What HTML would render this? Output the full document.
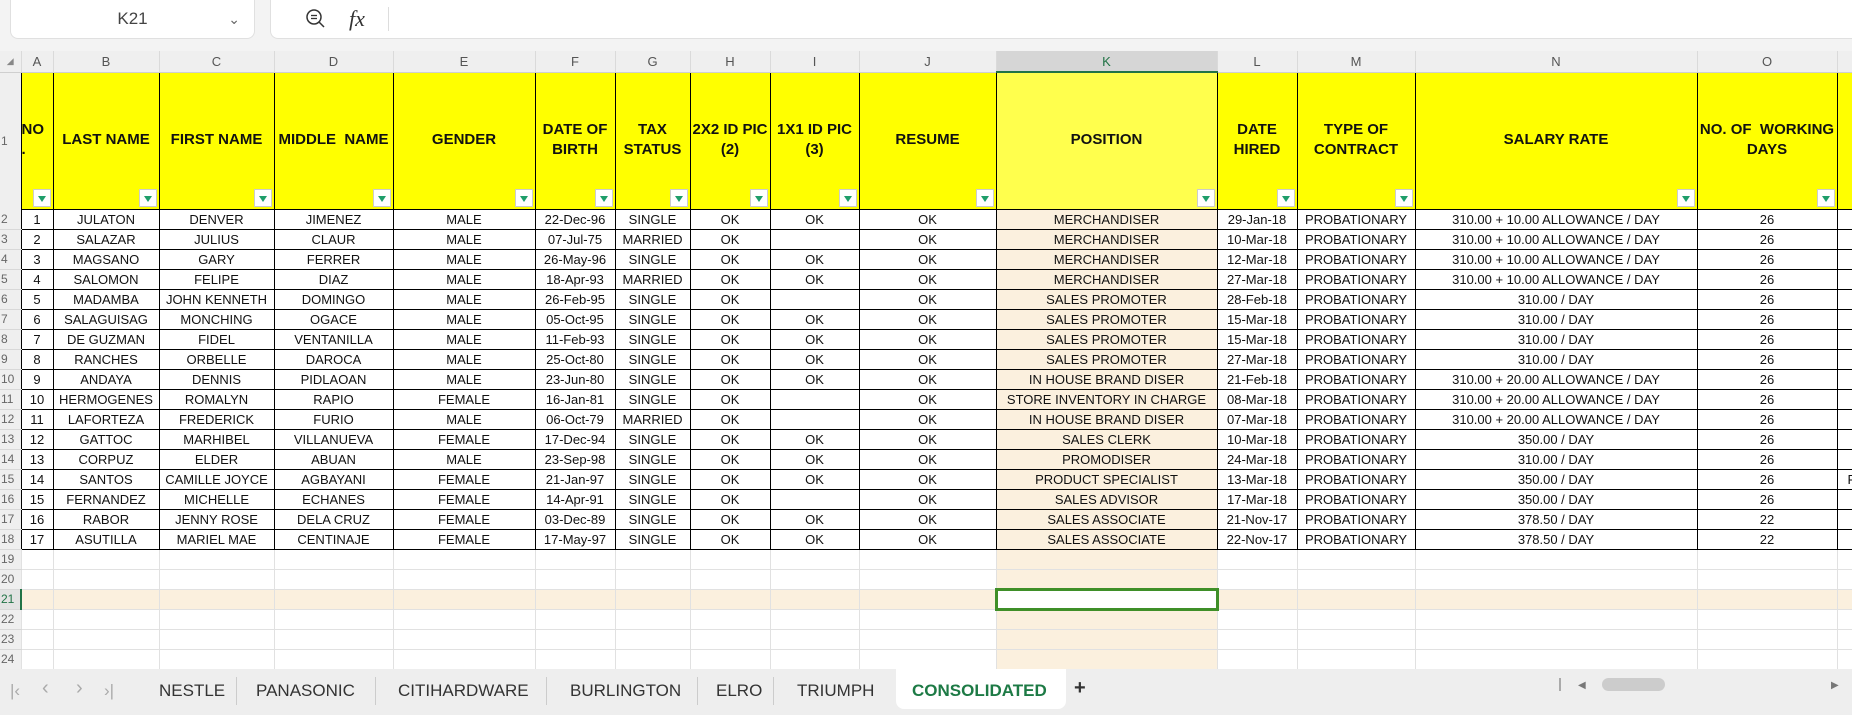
<!DOCTYPE html>
<html><head><meta charset="utf-8">
<style>
*{box-sizing:border-box;margin:0;padding:0}
body{width:1852px;height:715px;overflow:hidden;background:#fff;font-family:"Liberation Sans",sans-serif;position:relative}
#top{position:absolute;left:0;top:0;width:1852px;height:51px;background:#f3f3f3}
#nb{position:absolute;left:10px;top:0;width:245px;height:39px;background:#fff;border:1px solid #e0e0e0;border-top:none;border-radius:0 0 8px 8px;font-size:17px;color:#444;text-align:center;line-height:38px}
#fb{position:absolute;left:270px;top:0;width:1600px;height:39px;background:#fff;border:1px solid #e0e0e0;border-top:none;border-radius:0 0 0 8px}
table{position:absolute;left:0;top:51px;border-collapse:collapse;table-layout:fixed;width:1852px}
td{height:20px;font-size:13px;text-align:center;white-space:nowrap;overflow:hidden;border:1px solid #e1e1e1;color:#111;padding:0}
tr.ch td{height:21px;background:#efefef;color:#555;font-size:13px;border:none;border-right:1px solid #dadada;border-bottom:1px solid #cfcfcf}
td.rh{background:#efefef;color:#666;font-size:12px;border:none;border-bottom:1px solid #d8d8d8;text-align:left;padding-left:1px}
tr.h td{height:137px;background:#ffff00;font-weight:bold;font-size:15px;border:1px solid #000;white-space:normal;position:relative;line-height:20px;padding-bottom:2px}
tr.h td.rh{background:#efefef;font-weight:normal;font-size:12px;border:none;padding:0 0 0 1px}
tr.h td.k{background:#ffff4d}
.dd{position:absolute;right:2px;bottom:2px;width:18px;height:18px;background:#fff;border:1px solid #ccc}
.dd:after{content:"";position:absolute;left:4px;top:6px;border-left:4.5px solid transparent;border-right:4.5px solid transparent;border-top:6px solid #1e9e6a}
tr.d td{border:1px solid #000}
tr.d td.rh{border:none;border-bottom:1px solid #d8d8d8}
td.k{background:#fbf0de}
tr.sel td{background:#fbf0de}
tr.sel td.rh{background:#e3e3e3;color:#217346;border-right:2px solid #217346}
tr.sel td.kk{background:#fff;border:3px solid #3f8f28}
#tabs{position:absolute;left:0;top:669px;width:1852px;height:46px;background:#eeeeee;font-size:17px;color:#333}
.t{position:absolute;top:12px}
.sep{position:absolute;top:8px;width:1px;height:28px;background:#ccc}
</style></head><body>
<div id="top">
<div id="nb">K21<span style="position:absolute;right:14px;top:0;color:#666;font-size:14px">&#8964;</span></div>
<div id="fb">
<svg style="position:absolute;left:34px;top:8px" width="22" height="22" viewBox="0 0 22 22"><circle cx="9" cy="9" r="7" fill="none" stroke="#333" stroke-width="1.5"/><line x1="14" y1="14" x2="19" y2="19" stroke="#333" stroke-width="1.5"/><line x1="6" y1="7.5" x2="12" y2="7.5" stroke="#333" stroke-width="1.3"/><line x1="6" y1="10.5" x2="12" y2="10.5" stroke="#333" stroke-width="1.3"/></svg>
<span style="position:absolute;left:78px;top:6px;font-family:'Liberation Serif',serif;font-style:italic;font-size:22px;color:#333">fx</span>
<div style="position:absolute;left:117px;top:7px;width:1px;height:24px;background:#ddd"></div>
</div>
</div>
<table>
<colgroup><col style="width:21px"><col style="width:32px"><col style="width:106px"><col style="width:115px"><col style="width:119px"><col style="width:142px"><col style="width:80px"><col style="width:75px"><col style="width:80px"><col style="width:89px"><col style="width:137px"><col style="width:221px"><col style="width:80px"><col style="width:118px"><col style="width:282px"><col style="width:140px"><col style="width:15px"></colgroup>
<tr class="ch"><td style="font-size:9px;color:#888">&#9698;</td><td>A</td><td>B</td><td>C</td><td>D</td><td>E</td><td>F</td><td>G</td><td>H</td><td>I</td><td>J</td><td style="background:#d6d6d6;color:#217346;border-bottom:2px solid #217346">K</td><td>L</td><td>M</td><td>N</td><td>O</td><td></td></tr>
<tr class="h"><td class="rh">1</td><td style="text-align:left">NO<br>.<i class="dd"></i></td><td>LAST NAME<i class="dd"></i></td><td>FIRST NAME<i class="dd"></i></td><td>MIDDLE&nbsp; NAME<i class="dd"></i></td><td>GENDER<i class="dd"></i></td><td>DATE OF BIRTH<i class="dd"></i></td><td>TAX STATUS<i class="dd"></i></td><td>2X2 ID PIC (2)<i class="dd"></i></td><td>1X1 ID PIC (3)<i class="dd"></i></td><td>RESUME<i class="dd"></i></td><td class="k">POSITION<i class="dd"></i></td><td>DATE HIRED<i class="dd"></i></td><td>TYPE OF CONTRACT<i class="dd"></i></td><td>SALARY RATE<i class="dd"></i></td><td>NO. OF&nbsp; WORKING DAYS<i class="dd"></i></td><td></td></tr>
<tr class="d"><td class="rh">2</td><td>1</td><td>JULATON</td><td>DENVER</td><td>JIMENEZ</td><td>MALE</td><td>22-Dec-96</td><td>SINGLE</td><td>OK</td><td>OK</td><td>OK</td><td class="k">MERCHANDISER</td><td>29-Jan-18</td><td>PROBATIONARY</td><td>310.00 + 10.00 ALLOWANCE / DAY</td><td>26</td><td></td></tr>
<tr class="d"><td class="rh">3</td><td>2</td><td>SALAZAR</td><td>JULIUS</td><td>CLAUR</td><td>MALE</td><td>07-Jul-75</td><td>MARRIED</td><td>OK</td><td></td><td>OK</td><td class="k">MERCHANDISER</td><td>10-Mar-18</td><td>PROBATIONARY</td><td>310.00 + 10.00 ALLOWANCE / DAY</td><td>26</td><td></td></tr>
<tr class="d"><td class="rh">4</td><td>3</td><td>MAGSANO</td><td>GARY</td><td>FERRER</td><td>MALE</td><td>26-May-96</td><td>SINGLE</td><td>OK</td><td>OK</td><td>OK</td><td class="k">MERCHANDISER</td><td>12-Mar-18</td><td>PROBATIONARY</td><td>310.00 + 10.00 ALLOWANCE / DAY</td><td>26</td><td></td></tr>
<tr class="d"><td class="rh">5</td><td>4</td><td>SALOMON</td><td>FELIPE</td><td>DIAZ</td><td>MALE</td><td>18-Apr-93</td><td>MARRIED</td><td>OK</td><td>OK</td><td>OK</td><td class="k">MERCHANDISER</td><td>27-Mar-18</td><td>PROBATIONARY</td><td>310.00 + 10.00 ALLOWANCE / DAY</td><td>26</td><td></td></tr>
<tr class="d"><td class="rh">6</td><td>5</td><td>MADAMBA</td><td>JOHN KENNETH</td><td>DOMINGO</td><td>MALE</td><td>26-Feb-95</td><td>SINGLE</td><td>OK</td><td></td><td>OK</td><td class="k">SALES PROMOTER</td><td>28-Feb-18</td><td>PROBATIONARY</td><td>310.00 / DAY</td><td>26</td><td></td></tr>
<tr class="d"><td class="rh">7</td><td>6</td><td>SALAGUISAG</td><td>MONCHING</td><td>OGACE</td><td>MALE</td><td>05-Oct-95</td><td>SINGLE</td><td>OK</td><td>OK</td><td>OK</td><td class="k">SALES PROMOTER</td><td>15-Mar-18</td><td>PROBATIONARY</td><td>310.00 / DAY</td><td>26</td><td></td></tr>
<tr class="d"><td class="rh">8</td><td>7</td><td>DE GUZMAN</td><td>FIDEL</td><td>VENTANILLA</td><td>MALE</td><td>11-Feb-93</td><td>SINGLE</td><td>OK</td><td>OK</td><td>OK</td><td class="k">SALES PROMOTER</td><td>15-Mar-18</td><td>PROBATIONARY</td><td>310.00 / DAY</td><td>26</td><td></td></tr>
<tr class="d"><td class="rh">9</td><td>8</td><td>RANCHES</td><td>ORBELLE</td><td>DAROCA</td><td>MALE</td><td>25-Oct-80</td><td>SINGLE</td><td>OK</td><td>OK</td><td>OK</td><td class="k">SALES PROMOTER</td><td>27-Mar-18</td><td>PROBATIONARY</td><td>310.00 / DAY</td><td>26</td><td></td></tr>
<tr class="d"><td class="rh">10</td><td>9</td><td>ANDAYA</td><td>DENNIS</td><td>PIDLAOAN</td><td>MALE</td><td>23-Jun-80</td><td>SINGLE</td><td>OK</td><td>OK</td><td>OK</td><td class="k">IN HOUSE BRAND DISER</td><td>21-Feb-18</td><td>PROBATIONARY</td><td>310.00 + 20.00 ALLOWANCE / DAY</td><td>26</td><td></td></tr>
<tr class="d"><td class="rh">11</td><td>10</td><td>HERMOGENES</td><td>ROMALYN</td><td>RAPIO</td><td>FEMALE</td><td>16-Jan-81</td><td>SINGLE</td><td>OK</td><td></td><td>OK</td><td class="k">STORE INVENTORY IN CHARGE</td><td>08-Mar-18</td><td>PROBATIONARY</td><td>310.00 + 20.00 ALLOWANCE / DAY</td><td>26</td><td></td></tr>
<tr class="d"><td class="rh">12</td><td>11</td><td>LAFORTEZA</td><td>FREDERICK</td><td>FURIO</td><td>MALE</td><td>06-Oct-79</td><td>MARRIED</td><td>OK</td><td></td><td>OK</td><td class="k">IN HOUSE BRAND DISER</td><td>07-Mar-18</td><td>PROBATIONARY</td><td>310.00 + 20.00 ALLOWANCE / DAY</td><td>26</td><td></td></tr>
<tr class="d"><td class="rh">13</td><td>12</td><td>GATTOC</td><td>MARHIBEL</td><td>VILLANUEVA</td><td>FEMALE</td><td>17-Dec-94</td><td>SINGLE</td><td>OK</td><td>OK</td><td>OK</td><td class="k">SALES CLERK</td><td>10-Mar-18</td><td>PROBATIONARY</td><td>350.00 / DAY</td><td>26</td><td></td></tr>
<tr class="d"><td class="rh">14</td><td>13</td><td>CORPUZ</td><td>ELDER</td><td>ABUAN</td><td>MALE</td><td>23-Sep-98</td><td>SINGLE</td><td>OK</td><td>OK</td><td>OK</td><td class="k">PROMODISER</td><td>24-Mar-18</td><td>PROBATIONARY</td><td>310.00 / DAY</td><td>26</td><td></td></tr>
<tr class="d"><td class="rh">15</td><td>14</td><td>SANTOS</td><td>CAMILLE JOYCE</td><td>AGBAYANI</td><td>FEMALE</td><td>21-Jan-97</td><td>SINGLE</td><td>OK</td><td>OK</td><td>OK</td><td class="k">PRODUCT SPECIALIST</td><td>13-Mar-18</td><td>PROBATIONARY</td><td>350.00 / DAY</td><td>26</td><td style="text-align:left;padding-left:10px">F</td></tr>
<tr class="d"><td class="rh">16</td><td>15</td><td>FERNANDEZ</td><td>MICHELLE</td><td>ECHANES</td><td>FEMALE</td><td>14-Apr-91</td><td>SINGLE</td><td>OK</td><td></td><td>OK</td><td class="k">SALES ADVISOR</td><td>17-Mar-18</td><td>PROBATIONARY</td><td>350.00 / DAY</td><td>26</td><td></td></tr>
<tr class="d"><td class="rh">17</td><td>16</td><td>RABOR</td><td>JENNY ROSE</td><td>DELA CRUZ</td><td>FEMALE</td><td>03-Dec-89</td><td>SINGLE</td><td>OK</td><td>OK</td><td>OK</td><td class="k">SALES ASSOCIATE</td><td>21-Nov-17</td><td>PROBATIONARY</td><td>378.50 / DAY</td><td>22</td><td></td></tr>
<tr class="d"><td class="rh">18</td><td>17</td><td>ASUTILLA</td><td>MARIEL MAE</td><td>CENTINAJE</td><td>FEMALE</td><td>17-May-97</td><td>SINGLE</td><td>OK</td><td>OK</td><td>OK</td><td class="k">SALES ASSOCIATE</td><td>22-Nov-17</td><td>PROBATIONARY</td><td>378.50 / DAY</td><td>22</td><td></td></tr>
<tr><td class="rh">19</td><td></td><td></td><td></td><td></td><td></td><td></td><td></td><td></td><td></td><td></td><td class="k"></td><td></td><td></td><td></td><td></td><td></td></tr>
<tr><td class="rh">20</td><td></td><td></td><td></td><td></td><td></td><td></td><td></td><td></td><td></td><td></td><td class="k"></td><td></td><td></td><td></td><td></td><td></td></tr>
<tr class="sel"><td class="rh">21</td><td></td><td></td><td></td><td></td><td></td><td></td><td></td><td></td><td></td><td></td><td class="kk"></td><td></td><td></td><td></td><td></td><td></td></tr>
<tr><td class="rh">22</td><td></td><td></td><td></td><td></td><td></td><td></td><td></td><td></td><td></td><td></td><td class="k"></td><td></td><td></td><td></td><td></td><td></td></tr>
<tr><td class="rh">23</td><td></td><td></td><td></td><td></td><td></td><td></td><td></td><td></td><td></td><td></td><td class="k"></td><td></td><td></td><td></td><td></td><td></td></tr>
<tr><td class="rh">24</td><td></td><td></td><td></td><td></td><td></td><td></td><td></td><td></td><td></td><td></td><td class="k"></td><td></td><td></td><td></td><td></td><td></td></tr>
<tr><td class="rh">25</td><td></td><td></td><td></td><td></td><td></td><td></td><td></td><td></td><td></td><td></td><td class="k"></td><td></td><td></td><td></td><td></td><td></td></tr>
</table>
<div id="tabs">
<span class="t" style="left:10px;color:#aaa">|&lsaquo;</span><span class="t" style="left:42px;color:#aaa;font-size:20px;top:8px">&lsaquo;</span><span class="t" style="left:76px;color:#aaa;font-size:20px;top:8px">&rsaquo;</span><span class="t" style="left:104px;color:#aaa">&rsaquo;|</span>
<span class="t" style="left:159px">NESTLE</span><div class="sep" style="left:236px"></div>
<span class="t" style="left:256px">PANASONIC</span><div class="sep" style="left:375px"></div>
<span class="t" style="left:398px">CITIHARDWARE</span><div class="sep" style="left:546px"></div>
<span class="t" style="left:570px">BURLINGTON</span><div class="sep" style="left:697px"></div>
<span class="t" style="left:716px">ELRO</span><div class="sep" style="left:773px"></div>
<span class="t" style="left:797px">TRIUMPH</span>
<div style="position:absolute;left:896px;top:0;width:170px;height:40px;background:#fff;border-radius:0 0 8px 8px"></div>
<span class="t" style="left:912px;color:#1d7a45;font-weight:bold">CONSOLIDATED</span>
<span class="t" style="left:1074px;font-weight:bold;font-size:20px;top:8px">+</span>
<div style="position:absolute;left:1559px;top:9px;width:2px;height:13px;background:#aaa"></div>
<span class="t" style="left:1578px;font-size:10px;top:11px;color:#777">&#9664;</span>
<div style="position:absolute;left:1602px;top:9px;width:63px;height:13px;background:#ccc;border-radius:7px"></div>
<span class="t" style="left:1831px;font-size:10px;top:11px;color:#777">&#9654;</span>
</div>
</body></html>
